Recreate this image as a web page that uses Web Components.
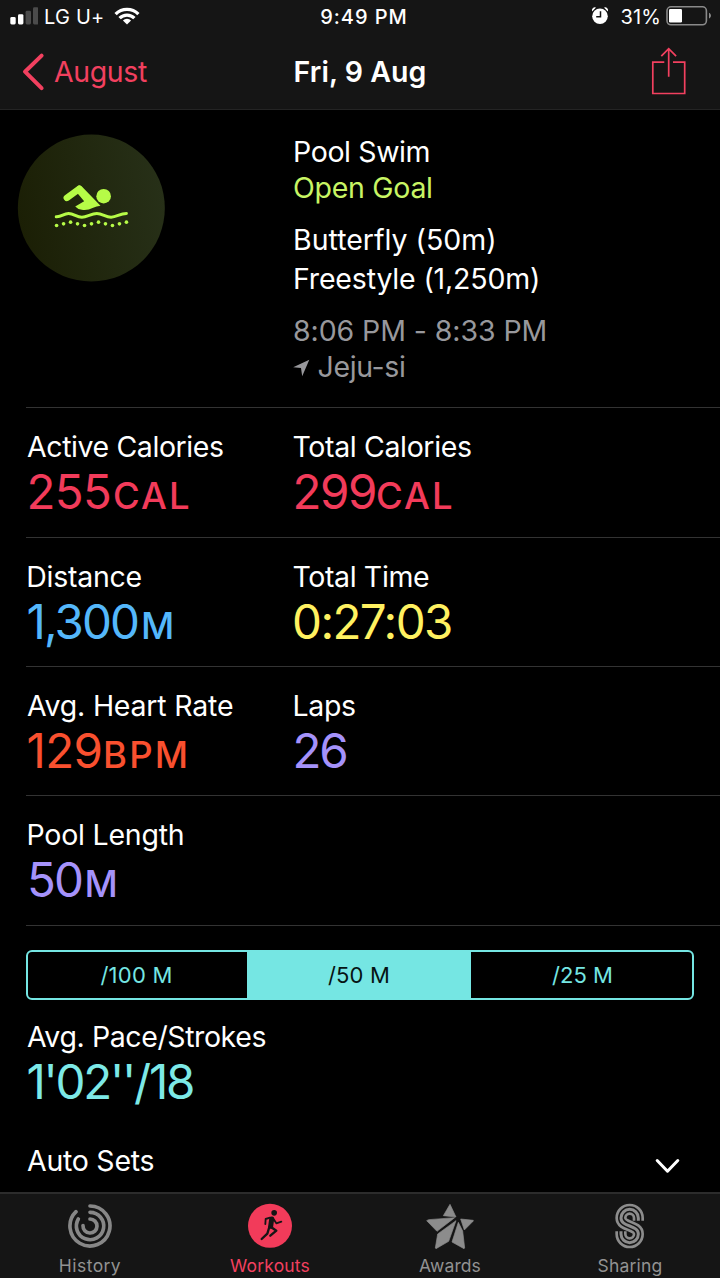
<!DOCTYPE html>
<html lang="en">
<head>
<meta charset="utf-8">
<title>Workout – Fri, 9 Aug</title>
<style>
html,body{margin:0;background:#000}
body{width:720px;height:1278px;overflow:hidden;color:#fff;font-family:Inter,"Liberation Sans",sans-serif}
</style>
</head>
<body>
<workout-screen></workout-screen>
<script>
const define = (name, html, setup) => {
  const tpl = document.createElement('template');
  tpl.innerHTML = html;
  customElements.define(name, class extends HTMLElement {
    constructor() {
      super();
      this.attachShadow({mode: 'open'}).append(tpl.content.cloneNode(true));
    }
    connectedCallback() { if (setup) setup(this, this.shadowRoot); }
  });
};

/* A line of text: size, tracking and line height come from attributes. */
define('ui-text', `<style>
:host{display:block;white-space:nowrap;font-size:28.5px;line-height:35px}
</style><slot></slot>`, el => {
  const map = {size: 'fontSize', track: 'letterSpacing', line: 'lineHeight'};
  for (const k in map) if (el.hasAttribute(k)) el.style[map[k]] = el.getAttribute(k) + 'px';
});

define('status-bar', `
<style>
:host{display:grid;grid-template-columns:1fr auto 1fr;height:34px;align-items:center;box-sizing:border-box}
.l,.r{display:flex;align-items:center}
.l{padding-left:10px}
.r{justify-content:flex-end;padding-right:8px}
.time{font-weight:500;margin-left:8px}
svg{display:block}
.carrier{margin-left:6px}
.wifi{margin-left:10px}
.pct{margin-left:12px}
.bat{margin-left:5px}
</style>
<div class="l">
  <svg width="28" height="34" viewBox="0 0 28 34"><g fill="#fff"><rect x=".3" y="17" width="5.4" height="7.5" rx="1.4"/><rect x="8" y="14.2" width="5.4" height="10.3" rx="1.4"/></g><g fill="#4b4b4b"><rect x="15.6" y="10.8" width="5.4" height="13.7" rx="1.4"/><rect x="23" y="7.2" width="5.4" height="17.3" rx="1.4"/></g></svg>
  <ui-text class="carrier" size="20" line="34" track="0.2">LG U+</ui-text>
  <svg class="wifi" width="26" height="34" viewBox="0 0 26 34"><g fill="none" stroke="#fff" stroke-width="3.3"><path d="M1.6 14.1a16.2 16.2 0 0 1 22.8 0"/><path d="M5.6 18.2a10.5 10.5 0 0 1 14.8 0"/></g><path d="M13 24.6l-4.1-4.1a5.8 5.8 0 0 1 8.2 0z" fill="#fff"/></svg>
</div>
<ui-text class="time" size="20" line="34" track="0.95">9:49 PM</ui-text>
<div class="r">
  <svg width="18" height="34" viewBox="0 0 18 34"><circle cx="9" cy="16.3" r="7.8" fill="#fff"/><path d="M9.5 11.2v5.6H5.2" fill="none" stroke="#141414" stroke-width="1.5"/><path d="M1.2 11.5A2.9 2.9 0 0 1 5 7.6M16.8 11.5A2.9 2.9 0 0 0 13 7.6" fill="#fff"/></svg>
  <ui-text class="pct" size="20" line="34" track="0.1">31%</ui-text>
  <svg class="bat" width="46" height="34" viewBox="0 0 46 34"><rect x="1" y="6.800" width="39.400" height="18" rx="4" fill="none" stroke="#8a8a8a" stroke-width="1.600"/><rect x="3" y="9" width="13" height="13.400" rx="1.200" fill="#fff"/><path d="M43 12.800c2.600 1 2.600 4.800 0 5.800z" fill="#8a8a8a"/></svg>
</div>`);

define('nav-bar', `
<style>
:host{display:grid;grid-template-columns:1fr auto 1fr;height:75px}
svg{display:block}
.back{display:flex;padding-left:21px;color:#f2405f}
.back ui-text{margin:20px 0 0 9px}
.title{font-weight:600;margin-top:20px}
.share{justify-self:end;margin-right:33px}
</style>
<div class="back">
  <svg width="24" height="75" viewBox="0 0 24 75"><path d="M20.600 21.600L4 37.700l16.600 16.400" fill="none" stroke="#f2405f" stroke-width="4" stroke-linecap="round" stroke-linejoin="round"/></svg>
  <ui-text track="-0.4">August</ui-text>
</div>
<ui-text class="title" track="0.05">Fri, 9 Aug</ui-text>
<svg class="share" width="36" height="75" viewBox="0 0 36 75"><g fill="none" stroke="#f2405f" stroke-width="1.700"><path d="M13.300 28.100H1.800v31.400h31.900V28.100H22"/><path d="M17.700 42.800V14.600M10.300 22.200l7.400-7.600 7.400 7.600"/></g></svg>`);

define('workout-summary', `
<style>
:host{display:grid;grid-template-columns:293px 1fr;height:297px}
.badge{display:block;margin:24px 0 0 17px}
.info{padding-top:24px}
.goal{color:#c8f564}
.gap{margin-top:17px}
.grey{color:#98989c}
.place{display:flex;margin-top:1px}
.place svg{margin:0 7.500px 0 0}
</style>
<svg class="badge" width="148" height="148" viewBox="21 26 445 445">
  <defs><linearGradient id="g" x1="0" y1=".6" x2="1" y2=".4"><stop offset="0" stop-color="#1b1f05"/><stop offset="1" stop-color="#273018"/></linearGradient></defs>
  <circle cx="244.500" cy="248.500" r="221" fill="url(#g)"/>
  <g fill="#b6fb47">
    <path d="M171 218l37-27" fill="none" stroke="#b6fb47" stroke-width="20" stroke-linecap="round"/>
    <path d="M202 183q8-5 14 1l56 58q-12 1-22 6-18 9-34 6-13-2-20-10l27-16-19-22z"/>
    <circle cx="281.500" cy="213" r="22"/>
    <path d="M139 275c17 1 21-10 37-10s24 11 40 11 28-11 45-11 26 11 43 11 26-11 46-11" fill="none" stroke="#b6fb47" stroke-width="9" stroke-linecap="round"/>
    <circle cx="140" cy="301" r="5.500"/><circle cx="161" cy="296" r="5.500"/><circle cx="182" cy="291" r="5.500"/><circle cx="203" cy="296" r="5.500"/><circle cx="224" cy="301" r="5.500"/><circle cx="245" cy="296" r="5.500"/><circle cx="266" cy="291" r="5.500"/><circle cx="287" cy="296" r="5.500"/><circle cx="308" cy="301" r="5.500"/><circle cx="329" cy="296" r="5.500"/><circle cx="350" cy="291" r="5.500"/>
  </g>
</svg>
<div class="info">
  <ui-text track="-0.38">Pool Swim</ui-text>
  <ui-text class="goal" track="-0.28" style="margin-top:1px">Open Goal</ui-text>
  <ui-text class="gap">Butterfly (50m)</ui-text>
  <ui-text track="-0.17" style="margin-top:4px">Freestyle (1,250m)</ui-text>
  <ui-text class="gap grey" track="-0.08">8:06 PM - 8:33 PM</ui-text>
  <div class="place grey">
    <svg width="17" height="35" viewBox="0 0 17 35"><path d="M16.300 10.700L9.200 27.200 8 18.900.2 18.200z" fill="#98989c"/></svg>
    <ui-text track="-0.36">Jeju-si</ui-text>
  </div>
</div>`);

/* Label over a coloured value, with an optional small-cap unit. */
define('metric-cell', `
<style>
:host{display:block}
.v{display:flex;margin-top:3px}
</style>
<slot name="label"></slot>
<div class="v"><slot></slot></div>`);

define('metric-row', `
<style>
:host{display:grid;grid-template-columns:266px 1fr;margin-left:26px;box-sizing:border-box;height:129px;padding-top:21px;border-top:1px solid #333}
:host([tall]){height:130px}
:host([last]){height:25px;padding:0}
</style><slot></slot>`);

define('segment-control', `
<style>
:host{display:grid;grid-template-columns:219px 224px 1fr;box-sizing:border-box;height:50px;margin:0 26px;border:2px solid #75e6e3;border-radius:6px;overflow:hidden;color:#75e6e3}
::slotted(*){text-align:center}
::slotted([selected]){background:#75e6e3;color:#061414}
::slotted(:first-child){padding-right:2px}
::slotted(:last-child){padding-left:2px}
</style><slot></slot>`);

define('tab-item', `
<style>
:host{display:flex;flex-direction:column;align-items:center;color:#929292}
:host([active]){color:#f2405f}
::slotted(svg){display:block;margin-top:9px}
</style>
<slot name="icon"></slot><slot></slot>`);

define('tab-bar', `
<style>
:host{display:grid;grid-template-columns:repeat(4,180px);box-sizing:border-box;height:86px;background:#151515;border-top:2px solid #2c2c2c}
tab-item ui-text{margin-top:6px}
</style>
<tab-item>
  <svg slot="icon" width="46" height="46" viewBox="202 219 138 138"><g fill="none" stroke="#878787" stroke-width="11" stroke-linecap="round"><path d="M271 228a60 60 0 1 1-42 17"/><path d="M271 247a41 41 0 1 1-35 20"/><path d="M271 267a21 21 0 1 1-21 20"/></g></svg>
  <ui-text size="17.500" line="22" track="0.44">History</ui-text>
</tab-item>
<tab-item active>
  <svg slot="icon" width="46" height="46" viewBox="741 219 138 138"><circle cx="810" cy="287.500" r="66" fill="#f23b5a"/><circle cx="822.500" cy="248.500" r="8.500" fill="#151515"/><g fill="none" stroke="#151515" stroke-linecap="round" stroke-linejoin="round"><path d="M815 267l-3 22" stroke-width="15"/><path d="M810 263l-13 4-1 15" stroke-width="5.500"/><path d="M820 266l9 14 15-5" stroke-width="5.500"/><path d="M813 291l16 11-18 15" stroke-width="7"/><path d="M808 291l-6 20-17 16" stroke-width="7"/></g></svg>
  <ui-text size="17.500" line="22" track="0.17">Workouts</ui-text>
</tab-item>
<tab-item>
  <svg slot="icon" width="50" height="46" viewBox="195 219 150 138"><g fill="#8c8c8c" stroke="#8c8c8c" stroke-width="2" stroke-linejoin="round"><path d="M270 223l18 38-38-4z"/><path d="M200 272l6-3 78-6-53 41z"/><path d="M302 267l38 4-1 3-26 26z"/><path d="M288 272l-55 40-7 42 2 2 38-22z"/><path d="M295 277l13 26 6 51-2 2-36-20z"/></g></svg>
  <ui-text size="17.500" line="22" track="0.09">Awards</ui-text>
</tab-item>
<tab-item>
  <svg slot="icon" width="46" height="46" viewBox="741 219 138 138"><g fill="none"><path stroke="#8c8c8c" stroke-width="34" d="M835 272V264A26 26 0 0 0 783 264C783 292 835 284 835 312A26 26 0 0 1 783 312V304"/><path stroke="#151515" stroke-width="18" d="M835 273V264A26 26 0 0 0 783 264C783 292 835 284 835 312A26 26 0 0 1 783 312V303"/><path stroke="#8c8c8c" stroke-width="9" d="M835 272V264A26 26 0 0 0 783 264C783 292 835 284 835 312A26 26 0 0 1 783 312V304"/></g></svg>
  <ui-text size="17.500" line="22" track="0.19">Sharing</ui-text>
</tab-item>`);

define('workout-screen', `
<style>
:host{display:flex;flex-direction:column;width:720px;height:1278px;background:#000}
header{height:110px;box-sizing:border-box;background:#151515;border-bottom:1px solid #242424}
main{flex:1}
.unit{font-weight:450;margin-top:4px}
.red{color:#f23b5a}.blue{color:#54b7fb}.yellow{color:#fff160}.orange{color:#f9502f}.violet{color:#a592fb}.cyan{color:#7de9e7}
.pace{padding:19px 0 0 27px}
.sets{display:flex;justify-content:space-between;padding:36px 40px 0 27px}
.sets svg{display:block;margin-top:12px}
</style>
<header><status-bar></status-bar><nav-bar></nav-bar></header>
<main>
  <workout-summary></workout-summary>
  <metric-row tall>
    <metric-cell class="red"><ui-text slot="label" track="-0.41" style="color:#fff;margin-left:1px">Active Calories</ui-text><ui-text size="47.500" line="50" track="-0.67" style="margin-left:.5px">255</ui-text><ui-text class="unit" size="36.500" line="50" track="2.100" style="margin-left:1.800px">CAL</ui-text></metric-cell>
    <metric-cell class="red"><ui-text slot="label" track="-0.36" style="color:#fff;margin-left:.5px">Total Calories</ui-text><ui-text size="47.500" line="50" track="-1.46" style="margin-left:.5px">299</ui-text><ui-text class="unit" size="36.500" line="50" track="2.100">CAL</ui-text></metric-cell>
  </metric-row>
  <metric-row>
    <metric-cell class="blue"><ui-text slot="label" track="-0.27" style="color:#fff;margin-left:.3px">Distance</ui-text><ui-text size="47.500" line="50" track="-1.88" style="margin-left:.5px">1,300</ui-text><ui-text class="unit" size="36.500" line="50" style="margin-left:2.900px">M</ui-text></metric-cell>
    <metric-cell class="yellow"><ui-text slot="label" track="-0.38" style="color:#fff;margin-left:.5px">Total Time</ui-text><ui-text size="47.500" line="50" track="-1.59">0:27:03</ui-text></metric-cell>
  </metric-row>
  <metric-row>
    <metric-cell class="orange"><ui-text slot="label" track="-0.2" style="color:#fff;margin-left:1px">Avg. Heart Rate</ui-text><ui-text size="47.500" line="50" track="-0.64" style="margin-left:.5px">129</ui-text><ui-text class="unit" size="36.500" line="50" track="2.200" style="margin-left:.7px">BPM</ui-text></metric-cell>
    <metric-cell class="violet"><ui-text slot="label" track="-0.36" style="color:#fff;margin-left:.5px">Laps</ui-text><ui-text size="47.500" line="50" track="-2.2" style="margin-left:.5px">26</ui-text></metric-cell>
  </metric-row>
  <metric-row tall>
    <metric-cell class="violet"><ui-text slot="label" track="-0.22" style="color:#fff;margin-left:.5px">Pool Length</ui-text><ui-text size="47.500" line="50" track="-1.88" style="margin-left:1px">50</ui-text><ui-text class="unit" size="36.500" line="50" style="margin-left:2.500px">M</ui-text></metric-cell>
  </metric-row>
  <metric-row last></metric-row>
  <segment-control>
    <ui-text size="22" line="47" track="0.24">/100 M</ui-text><ui-text size="22" line="47" track="0.16" selected>/50 M</ui-text><ui-text size="22" line="47" track="0.02">/25 M</ui-text>
  </segment-control>
  <div class="pace">
    <metric-cell class="cyan"><ui-text slot="label" track="-0.4" style="color:#fff">Avg. Pace/Strokes</ui-text><ui-text size="47.500" line="50" track="-2.24" style="margin-left:-.5px">1'02''/18</ui-text></metric-cell>
  </div>
  <div class="sets">
    <ui-text track="-0.26">Auto Sets</ui-text>
    <svg width="26" height="24" viewBox="0 0 26 24"><path d="M3.200 5.500L13.500 16.200 23.800 5.500" fill="none" stroke="#fff" stroke-width="3" stroke-linecap="round" stroke-linejoin="round"/></svg>
  </div>
</main>
<tab-bar></tab-bar>`);
</script>
</body>
</html>
